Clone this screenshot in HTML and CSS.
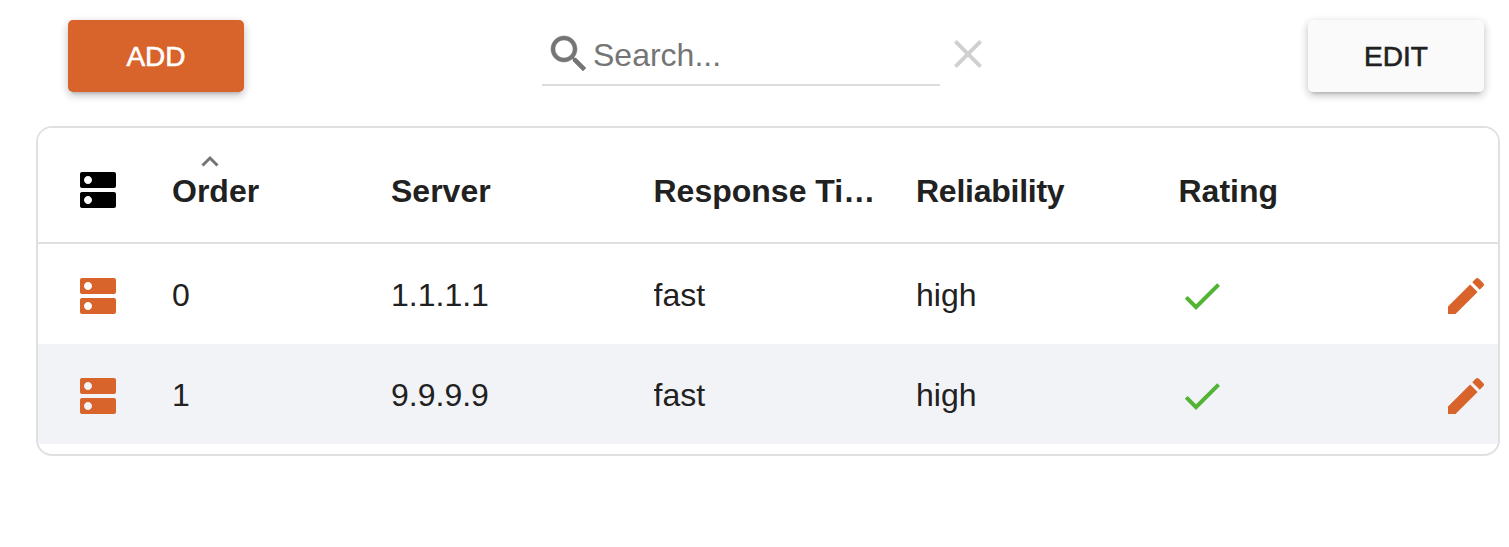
FILE: index.html
```html
<!DOCTYPE html>
<html lang="en">
<head>
    <meta charset="UTF-8">
    <meta name="viewport" content="width=device-width, initial-scale=1.0">
    <title>Servers</title>
    <link rel="stylesheet" href="styles.css">
</head>
<body>
    <!-- Icons used in the table -->
    <svg class="sprite" width="0" height="0">
        <symbol id="icon-dns" viewBox="0 0 24 24">
            <path d="M20 13H4c-.55 0-1 .45-1 1v6c0 .55.45 1 1 1h16c.55 0 1-.45 1-1v-6c0-.55-.45-1-1-1zM7 19c-1.1 0-2-.9-2-2s.9-2 2-2 2 .9 2 2-.9 2-2 2zM20 3H4c-.55 0-1 .45-1 1v6c0 .55.45 1 1 1h16c.55 0 1-.45 1-1V4c0-.55-.45-1-1-1zM7 9c-1.1 0-2-.9-2-2s.9-2 2-2 2 .9 2 2-.9 2-2 2z"/>
        </symbol>
        <symbol id="icon-check" viewBox="0 0 24 24">
            <path d="M9 16.17L4.83 12l-1.42 1.41L9 19 21 7l-1.41-1.41z"/>
        </symbol>
        <symbol id="icon-edit" viewBox="0 0 24 24">
            <path d="M3 17.25V21h3.75L17.81 9.94l-3.75-3.75L3 17.25zM20.71 7.04c.39-.39.39-1.02 0-1.41l-2.34-2.34c-.39-.39-1.02-.39-1.41 0l-1.83 1.83 3.75 3.75 1.83-1.83z"/>
        </symbol>
    </svg>

    <div class="toolbar">
        <button class="btn btn-add">ADD</button>
        <div class="search">
            <label class="search-field">
                <svg class="icon icon-search" viewBox="0 0 24 24"><path d="M15.5 14h-.79l-.28-.27C15.41 12.59 16 11.11 16 9.5 16 5.91 13.09 3 9.5 3S3 5.91 3 9.5 5.91 16 9.5 16c1.61 0 3.09-.59 4.23-1.57l.27.28v.79l5 4.99L20.49 19l-4.99-5zm-6 0C7.01 14 5 11.99 5 9.5S7.01 5 9.5 5 14 7.01 14 9.5 11.99 14 9.5 14z"/></svg>
                <input type="text" placeholder="Search...">
            </label>
            <svg class="icon icon-clear" viewBox="0 0 24 24"><path d="M19 6.41L17.59 5 12 10.59 6.41 5 5 6.41 10.59 12 5 17.59 6.41 19 12 13.41 17.59 19 19 17.59 13.41 12z"/></svg>
        </div>
        <button class="btn">EDIT</button>
    </div>

    <div class="table">
        <div class="row header">
            <svg class="icon"><use href="#icon-dns"/></svg>
            <div class="cell sorted">
                <svg class="sort-arrow" viewBox="0 0 18 12"><path d="M1.5 10.5L9 3l7.5 7.5"/></svg>
                Order
            </div>
            <div class="cell">Server</div>
            <div class="cell">Response Time</div>
            <div class="cell reliability">Reliability</div>
            <div class="cell">Rating</div>
        </div>
        <div class="row">
            <svg class="icon icon-server"><use href="#icon-dns"/></svg>
            <div class="cell">0</div>
            <div class="cell">1.1.1.1</div>
            <div class="cell">fast</div>
            <div class="cell">high</div>
            <svg class="icon icon-check"><use href="#icon-check"/></svg>
            <svg class="icon icon-edit"><use href="#icon-edit"/></svg>
        </div>
        <div class="row">
            <svg class="icon icon-server"><use href="#icon-dns"/></svg>
            <div class="cell">1</div>
            <div class="cell">9.9.9.9</div>
            <div class="cell">fast</div>
            <div class="cell">high</div>
            <svg class="icon icon-check"><use href="#icon-check"/></svg>
            <svg class="icon icon-edit"><use href="#icon-edit"/></svg>
        </div>
    </div>
</body>
</html>
```

FILE: styles.css
```css
* {
    box-sizing: border-box;
}
body {
    margin: 0;
    padding: 20px 9px 0 36px;
    background: white;
    color: #212121;
    font-family: "Liberation Sans", Arial, sans-serif;
    font-size: 32px;
    overflow: hidden;
}
.sprite {
    display: block;
}
.icon {
    display: block;
    width: 48px;
    height: 48px;
    flex: none;
    fill: currentColor;
}
.toolbar {
    display: flex;
    justify-content: space-between;
    height: 106px;
    padding: 0 16px 0 32px;
}
.btn {
    width: 176px;
    height: 72px;
    padding: 1px 0 0;
    border: none;
    border-radius: 5px;
    background: #fafafa;
    color: #212121;
    font: 28px "Liberation Sans", Arial, sans-serif;
    -webkit-text-stroke: 0.6px currentColor;
    cursor: pointer;
    box-shadow: 0 6px 2px -4px rgba(0,0,0,0.1), 0 4px 8px rgba(0,0,0,0.14), 0 2px 10px rgba(0,0,0,0.12);
}
.btn-add {
    background: #d8632b;
    color: white;
}
.search {
    display: flex;
    gap: 4px;
    padding-top: 10px;
    margin-right: 18px;
}
.search-field {
    display: flex;
    width: 398px;
    height: 56px;
    padding-left: 3px;
    border-bottom: 2px solid #dcdcdc;
    color: #757575;
}
.icon-search {
    stroke: currentColor;
    stroke-width: 0.25;
}
.search-field input {
    width: 340px;
    height: 50px;
    padding: 0;
    border: none;
    outline: none;
    background: none;
    font: inherit;
}
.search-field input::placeholder {
    color: #757575;
}
.icon-clear {
    color: #d0d0d0;
}
.table {
    height: 330px;
    border: 2px solid #e0e0e0;
    border-radius: 16px;
    overflow: hidden;
}
.row {
    display: grid;
    grid-template-columns: 98px 219px 262.5px 262.5px 262.5px 1fr 48px;
    align-items: center;
    height: 100px;
    padding: 4px 8px 0 36px;
}
.row:nth-child(odd) {
    background: #f2f3f7;
}
.row.header {
    height: 116px;
    padding-top: 10px;
    border-bottom: 2px solid #e0e0e0;
    background: white;
    font-weight: bold;
}
.header .icon {
    color: black;
}
.cell {
    padding: 0 40px 2px 0;
    line-height: 40px;
    white-space: nowrap;
    overflow: hidden;
    text-overflow: ellipsis;
}
.header .cell {
    padding-top: 2px;
    padding-bottom: 0;
}
.reliability {
    letter-spacing: -0.25px;
}
.header .sorted {
    position: relative;
    overflow: visible;
}
.sort-arrow {
    position: absolute;
    top: -14px;
    left: 29px;
    width: 18px;
    height: 12px;
    fill: none;
    stroke: #757575;
    stroke-width: 3;
}
.icon-server {
    color: #d8632b;
}
.icon-check {
    margin-left: -0.5px;
    color: #52b435;
}
.icon-edit {
    color: #d8632b;
}
```
